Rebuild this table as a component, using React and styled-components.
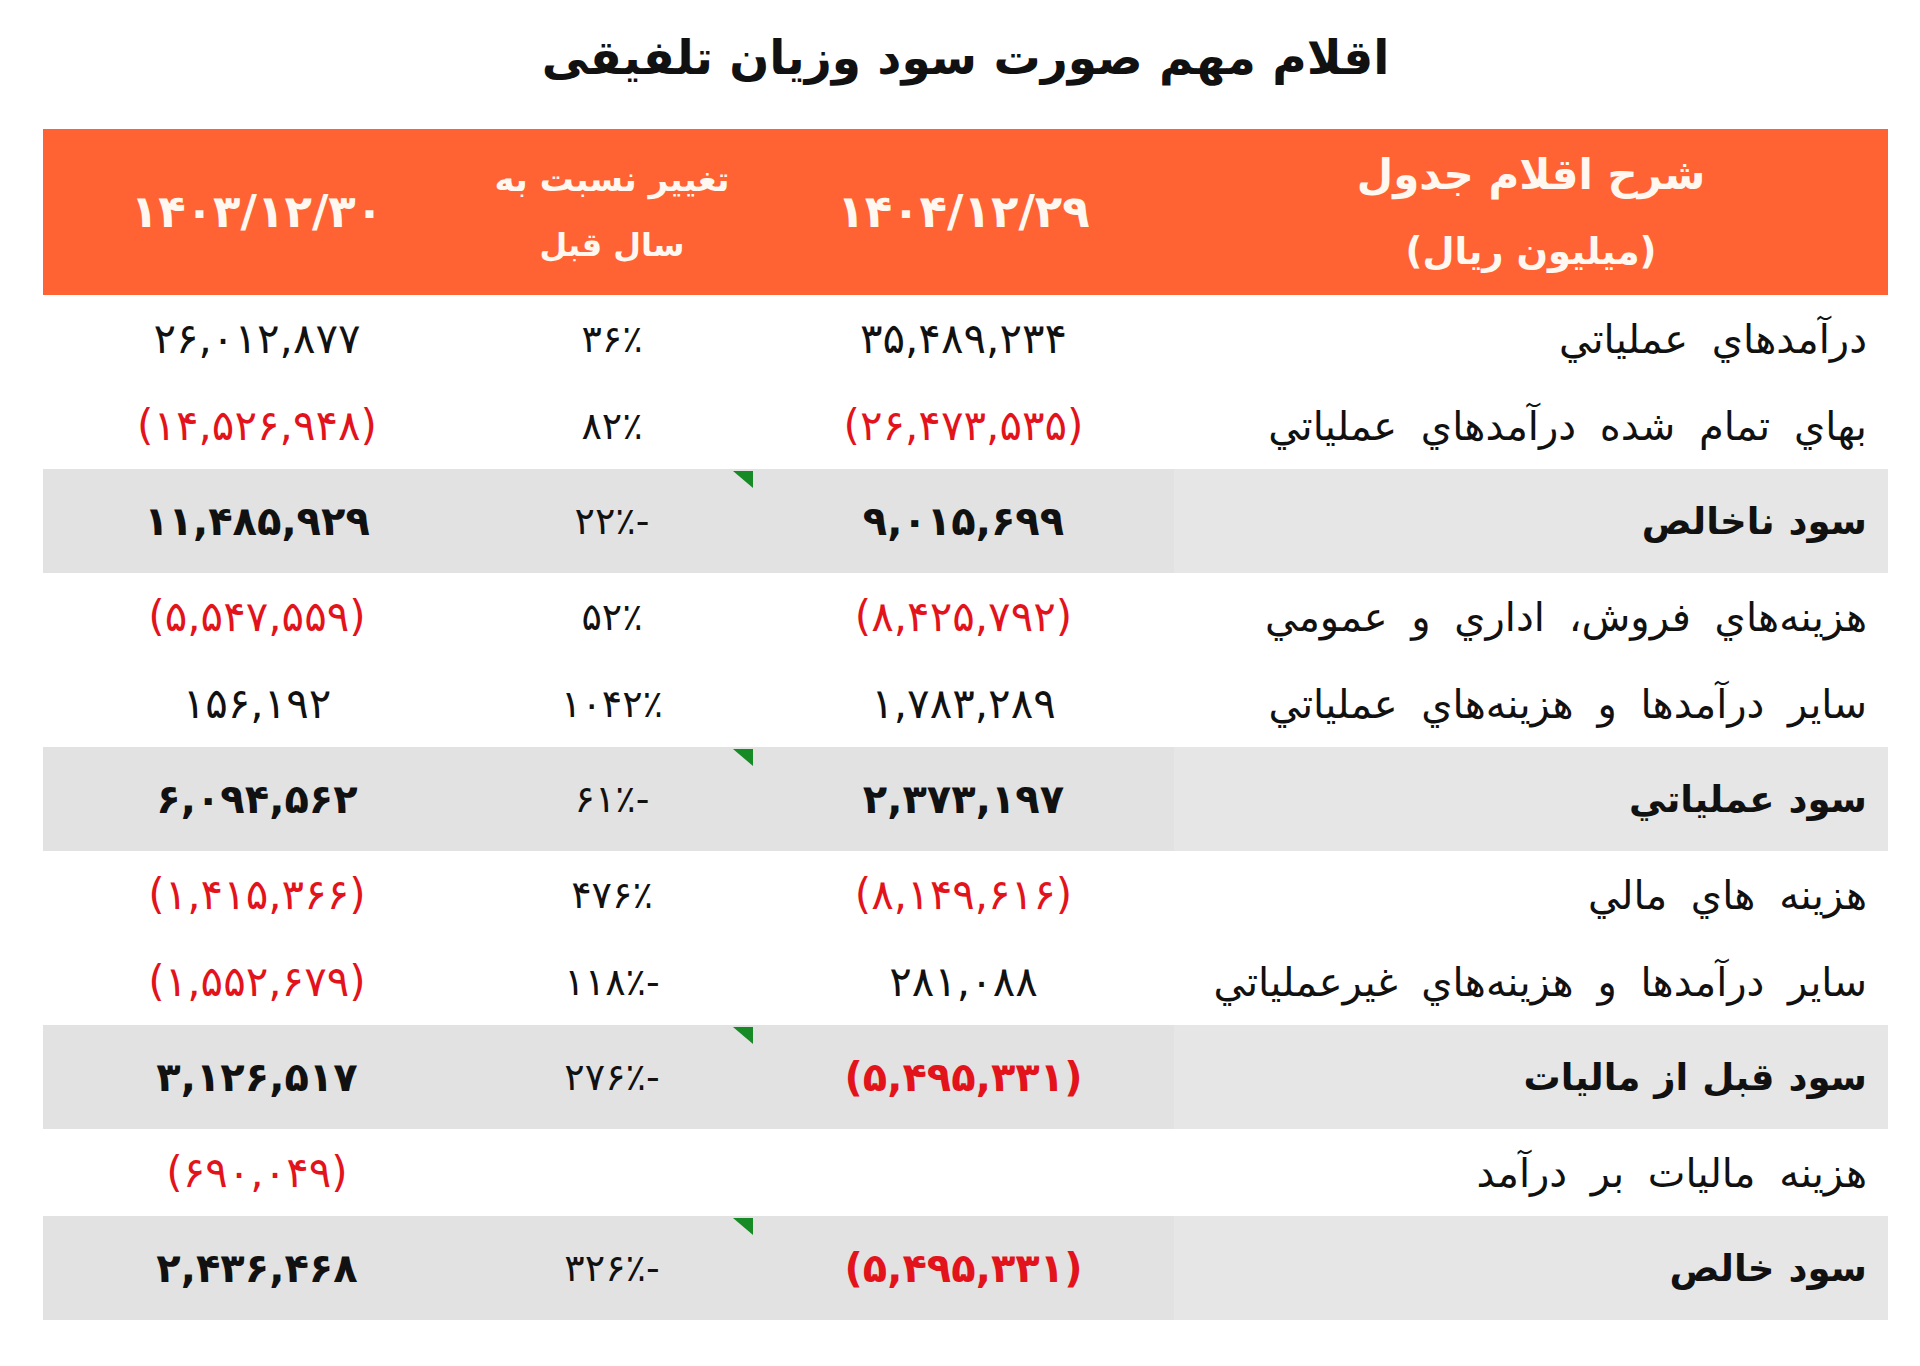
import React from 'react';
import styled, { createGlobalStyle } from 'styled-components';

const rows = [
  { label: 'درآمدهاي عملياتي', cur: '۳۵,۴۸۹,۲۳۴', chg: '۳۶٪', prev: '۲۶,۰۱۲,۸۷۷' },
  { label: 'بهاي تمام شده درآمدهاي عملياتي', cur: '(۲۶,۴۷۳,۵۳۵)', chg: '۸۲٪', prev: '(۱۴,۵۲۶,۹۴۸)' },
  { label: 'سود ناخالص', cur: '۹,۰۱۵,۶۹۹', chg: '۲۲٪-', prev: '۱۱,۴۸۵,۹۲۹', total: true },
  { label: 'هزينه‌هاي فروش، اداري و عمومي', cur: '(۸,۴۲۵,۷۹۲)', chg: '۵۲٪', prev: '(۵,۵۴۷,۵۵۹)' },
  { label: 'ساير درآمدها و هزينه‌هاي عملياتي', cur: '۱,۷۸۳,۲۸۹', chg: '۱۰۴۲٪', prev: '۱۵۶,۱۹۲' },
  { label: 'سود عملياتي', cur: '۲,۳۷۳,۱۹۷', chg: '۶۱٪-', prev: '۶,۰۹۴,۵۶۲', total: true },
  { label: 'هزينه هاي مالي', cur: '(۸,۱۴۹,۶۱۶)', chg: '۴۷۶٪', prev: '(۱,۴۱۵,۳۶۶)' },
  { label: 'ساير درآمدها و هزينه‌هاي غيرعملياتي', cur: '۲۸۱,۰۸۸', chg: '۱۱۸٪-', prev: '(۱,۵۵۲,۶۷۹)' },
  { label: 'سود قبل از ماليات', cur: '(۵,۴۹۵,۳۳۱)', chg: '۲۷۶٪-', prev: '۳,۱۲۶,۵۱۷', total: true },
  { label: 'هزينه ماليات بر درآمد', cur: '', chg: '', prev: '(۶۹۰,۰۴۹)' },
  { label: 'سود خالص', cur: '(۵,۴۹۵,۳۳۱)', chg: '۳۲۶٪-', prev: '۲,۴۳۶,۴۶۸', total: true },
];

const isNeg = (v) => v.startsWith('(');

const App = () => {
  return (
    <>
      <GlobalStyle />
      <Page>
        <Title>اقلام مهم صورت سود وزیان تلفیقی</Title>
        <Table>
          <HeadCell gap="34px">
            <HeadLine size="42px">شرح اقلام جدول</HeadLine>
            <HeadLine size="37px">(میلیون ریال)</HeadLine>
          </HeadCell>
          <HeadCell>
            <DateText>۱۴۰۴/۱۲/۲۹</DateText>
          </HeadCell>
          <HeadCell gap="30px">
            <HeadLine size="34px">تغییر نسبت به</HeadLine>
            <HeadLine size="32px">سال قبل</HeadLine>
          </HeadCell>
          <HeadCell>
            <DateText>۱۴۰۳/۱۲/۳۰</DateText>
          </HeadCell>

          {rows.map((r) => (
            <React.Fragment key={r.label}>
              <LabelCell total={r.total}>{r.label}</LabelCell>
              <NumCell total={r.total} neg={isNeg(r.cur)}>{r.cur}</NumCell>
              <NumCell total={r.total} pct>
                {r.total && <Marker />}
                {r.chg}
              </NumCell>
              <NumCell total={r.total} neg={isNeg(r.prev)}>{r.prev}</NumCell>
            </React.Fragment>
          ))}
        </Table>
      </Page>
    </>
  );
};

const GlobalStyle = createGlobalStyle`
  body {
    margin: 0;
    background: #ffffff;
  }
`;

const Page = styled.div`
  width: 1920px;
  padding: 14px 32px 40px 43px;
  box-sizing: border-box;
  direction: rtl;
`;

const Title = styled.h1`
  margin: 0 0 27px 0;
  text-align: center;
  font-family: 'DejaVu Sans', sans-serif;
  font-weight: 700;
  font-size: 47px;
  line-height: 88px;
  color: #111;
`;

const Table = styled.div`
  display: grid;
  grid-template-columns: 714px 421px 282px 428px;
`;

const HeadCell = styled.div`
  height: 166px;
  background: #ff6333;
  color: #fff8f0;
  display: flex;
  flex-direction: column;
  align-items: center;
  justify-content: center;
  gap: ${(p) => p.gap || '0'};
  font-family: 'DejaVu Sans', sans-serif;
  font-weight: 700;
  line-height: 1.1;
`;

const HeadLine = styled.span`
  font-size: ${(p) => p.size};
`;

const DateText = styled.span`
  direction: ltr;
  font-size: 45px;
`;

const LabelCell = styled.div`
  height: ${(p) => (p.total ? '104px' : '87px')};
  background: ${(p) => (p.total ? '#e6e6e6' : '#ffffff')};
  display: flex;
  align-items: center;
  padding-right: 21px;
  font-family: 'DejaVu Sans', sans-serif;
  font-weight: ${(p) => (p.total ? 700 : 400)};
  font-size: ${(p) => (p.total ? '37px' : '40px')};
  word-spacing: ${(p) => (p.total ? '1px' : '11px')};
  color: #111;
`;

const NumCell = styled.div`
  position: relative;
  height: ${(p) => (p.total ? '104px' : '87px')};
  background: ${(p) => (p.total ? '#e2e2e2' : '#ffffff')};
  display: flex;
  align-items: center;
  justify-content: center;
  direction: ltr;
  font-family: 'DejaVu Sans', sans-serif;
  font-weight: ${(p) => (p.total && !p.pct ? 700 : 400)};
  font-size: ${(p) => (p.pct ? '38px' : p.total ? '40px' : '42px')};
  color: ${(p) => (p.neg ? '#e3131b' : '#111')};
`;

const Marker = styled.span`
  position: absolute;
  top: 2px;
  right: 0;
  width: 0;
  height: 0;
  border-top: 17px solid #168a24;
  border-left: 20px solid transparent;
`;

export default App;
